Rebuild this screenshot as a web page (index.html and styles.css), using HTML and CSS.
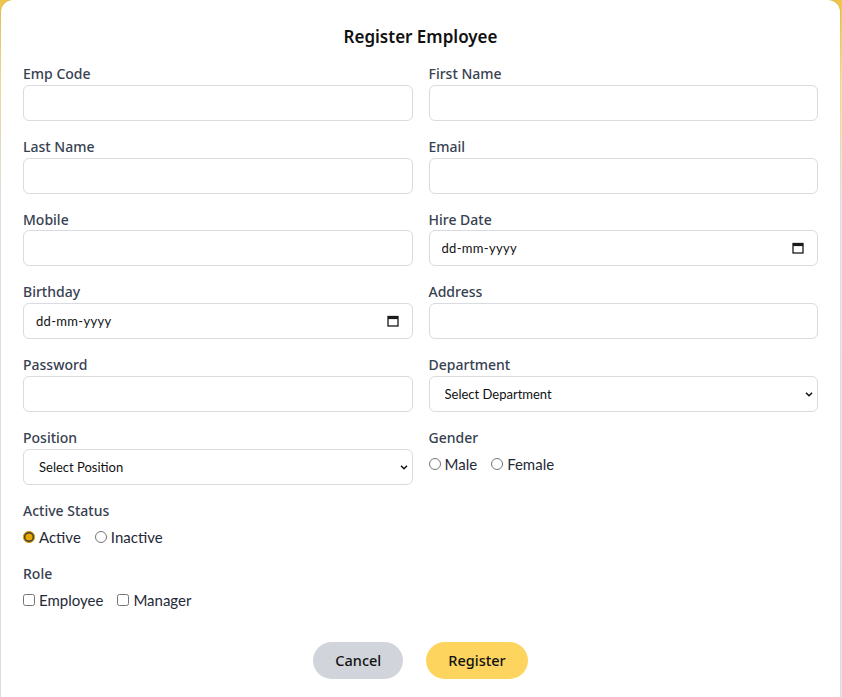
FILE: index.html
```html
<!DOCTYPE html>
<html lang="en">
<head>
<meta charset="utf-8">
<title>Register Employee</title>
<link rel="stylesheet" href="styles.css">
</head>
<body>
<div class="modal">
  <h2 class="title">Register Employee</h2>
  <form class="form">
    <div class="grid">
      <div class="field">
        <label class="label">Emp Code</label>
        <input class="control" type="text">
      </div>
      <div class="field">
        <label class="label">First Name</label>
        <input class="control" type="text">
      </div>
      <div class="field">
        <label class="label">Last Name</label>
        <input class="control" type="text">
      </div>
      <div class="field">
        <label class="label">Email</label>
        <input class="control" type="text">
      </div>
      <div class="field">
        <label class="label">Mobile</label>
        <input class="control" type="text">
      </div>
      <div class="field">
        <label class="label">Hire Date</label>
        <div class="wrap">
          <input class="control date" type="text" placeholder="dd-mm-yyyy">
          <svg class="cal" width="12" height="12" viewBox="0 0 12 12"><rect x="1" y="1.5" width="10" height="9.5" fill="none" stroke="#1a1a1a" stroke-width="1.3"/><rect x="1" y="1.5" width="10" height="2.6" fill="#1a1a1a"/></svg>
        </div>
      </div>
      <div class="field">
        <label class="label">Birthday</label>
        <div class="wrap">
          <input class="control date" type="text" placeholder="dd-mm-yyyy">
          <svg class="cal" width="12" height="12" viewBox="0 0 12 12"><rect x="1" y="1.5" width="10" height="9.5" fill="none" stroke="#1a1a1a" stroke-width="1.3"/><rect x="1" y="1.5" width="10" height="2.6" fill="#1a1a1a"/></svg>
        </div>
      </div>
      <div class="field">
        <label class="label">Address</label>
        <input class="control" type="text">
      </div>
      <div class="field">
        <label class="label">Password</label>
        <input class="control" type="password">
      </div>
      <div class="field">
        <label class="label">Department</label>
        <div class="wrap">
          <select class="control select"><option>Select Department</option></select>
          <svg class="chev" width="10" height="10" viewBox="0 0 10 10"><path d="M2 3.8 L5 6.8 L8 3.8" fill="none" stroke="#111" stroke-width="1.5"/></svg>
        </div>
      </div>
      <div class="field">
        <label class="label">Position</label>
        <div class="wrap">
          <select class="control select"><option>Select Position</option></select>
          <svg class="chev" width="10" height="10" viewBox="0 0 10 10"><path d="M2 3.8 L5 6.8 L8 3.8" fill="none" stroke="#111" stroke-width="1.5"/></svg>
        </div>
      </div>
      <div class="field">
        <label class="label">Gender</label>
        <div class="choices">
          <label class="choice"><input type="radio" name="gender">Male</label>
          <label class="choice"><input type="radio" name="gender">Female</label>
        </div>
      </div>
    </div>

    <div class="field block">
      <label class="label">Active Status</label>
      <div class="choices">
        <label class="choice"><input type="radio" name="status" checked>Active</label>
        <label class="choice"><input type="radio" name="status">Inactive</label>
      </div>
    </div>

    <div class="field block">
      <label class="label">Role</label>
      <div class="choices">
        <label class="choice"><input type="checkbox">Employee</label>
        <label class="choice"><input type="checkbox">Manager</label>
      </div>
    </div>

    <div class="actions">
      <button type="button" class="btn cancel">Cancel</button>
      <button type="button" class="btn primary">Register</button>
    </div>
  </form>
</div>
</body>
</html>
```
FILE: styles.css
```css
html, body {
  margin: 0;
  height: 100%;
  overflow: hidden;
}
body {
  background: linear-gradient(180deg, #eec54a 0%, #f7e3a0 12%, #e9e9ec 30%, #e5e7eb 100%);
  font-family: "Noto Sans", Lato, sans-serif;
  color: #111827;
}
.modal {
  box-sizing: border-box;
  margin: 0 2px 0 1px;
  min-height: 100vh;
  background: #fff;
  border-radius: 12px 12px 0 0;
  padding: 23px 22px 0 22px;
  box-shadow: 0 0 2px rgba(0, 0, 0, 0.18);
}
.title {
  margin: 0 0 13px 0;
  text-align: center;
  font-family: "Noto Sans", Lato, sans-serif;
  font-size: 17px;
  line-height: 28px;
  font-weight: 600;
  color: #111;
}
.form {
  margin: 0;
}
.grid {
  display: grid;
  grid-template-columns: 1fr 1fr;
  column-gap: 16px;
  row-gap: 16px;
}
.field {
  display: flex;
  flex-direction: column;
}
.block {
  margin-top: 16px;
}
.label {
  display: block;
  font-family: "Noto Sans", Lato, sans-serif;
  font-size: 14px;
  line-height: 20px;
  font-weight: 500;
  color: #374151;
  margin-bottom: 0.8px;
}
.block .label {
  margin-bottom: 5px;
}
.control {
  box-sizing: border-box;
  width: 100%;
  height: 36px;
  border: 1px solid #d8dbe0;
  border-radius: 6px;
  background: #fff;
  padding: 0 12px;
  font-family: Lato, "Noto Sans", sans-serif;
  font-size: 13px;
  color: #111;
  outline: none;
}
.wrap {
  position: relative;
}
.date::placeholder {
  color: #111;
  letter-spacing: 0.3px;
}
.cal {
  position: absolute;
  right: 14px;
  top: 12px;
  pointer-events: none;
}
.select {
  appearance: none;
  -webkit-appearance: none;
  padding-left: 15px;
}
.chev {
  position: absolute;
  right: 4px;
  top: 13px;
  pointer-events: none;
}
.choices {
  display: flex;
  align-items: center;
  gap: 14px;
  height: 22px;
}
.grid .choices {
  margin-top: 4px;
}
.choice {
  display: inline-flex;
  align-items: center;
  font-family: Lato, "Noto Sans", sans-serif;
  font-size: 15px;
  color: #1f2937;
}
.choice input {
  margin: 0 4px 0 0;
  width: 12px;
  height: 12px;
  accent-color: #e8a800;
}
.actions {
  display: flex;
  justify-content: center;
  gap: 23px;
  margin-top: 31px;
}
.btn {
  height: 37px;
  border: none;
  border-radius: 999px;
  padding: 0 22px;
  font-family: "Noto Sans", Lato, sans-serif;
  font-size: 14.5px;
  font-weight: 500;
  color: #111;
  cursor: pointer;
}
.cancel {
  background: #d1d5db;
}
.primary {
  background: #fdd55e;
}
```
